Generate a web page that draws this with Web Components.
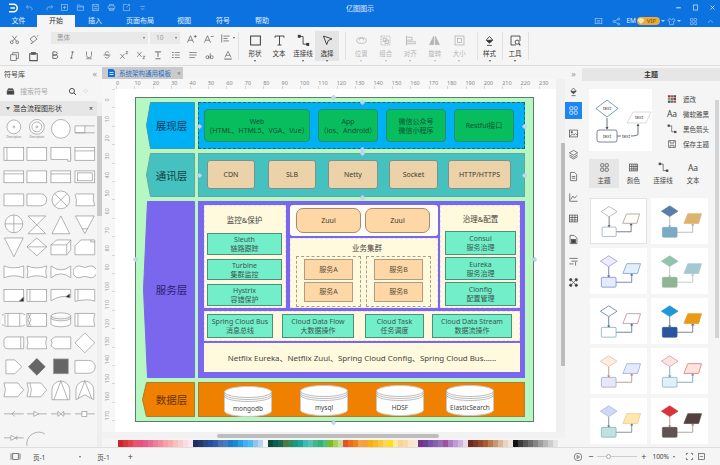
<!DOCTYPE html>
<html lang="zh">
<head>
<meta charset="utf-8">
<title>亿图图示</title>
<style>
  html, body { margin: 0; padding: 0; height: 100%; overflow: hidden; }
  body { font-family: "Noto Sans", "Noto Sans CJK SC", sans-serif; color: #333; }
</style>
</head>
<body>
<edraw-app></edraw-app>
<script>
const ICONS = {
  logo: '<path d="M4 3h6a5 5 0 0 1 0 10H4M6 8h6" stroke-width="2"/>',
  undo: '<path d="M5 4 2.5 7 5 10M3 7h6a4 4 0 0 1 3 6"/>',
  redo: '<path d="M11 4l2.5 3L11 10M13 7H7a4 4 0 0 0-3 6"/>',
  newfile: '<rect x="2.5" y="2.5" width="11" height="11"/><path d="M8 5v6M5 8h6"/>',
  open: '<path d="M2.5 13V3.5h4l1 2h6V13zM2.5 7h11"/>',
  save: '<path d="M2.5 2.5h11v11h-11zM5 2.5v4h6v-4M5 13.5V10h6v3.5"/>',
  print: '<rect x="2" y="5" width="12" height="6" rx="2"/><path d="M4.5 5V2.5h7V5M4.5 9.5h7v4h-7z"/>',
  exportf: '<path d="M9 2.5H2.5v11h11V8M8 8l5.500-5.500M10 2.500h3.500V6"/>',
  more: '<path d="M4 6h8M5 9l3 3 3-3"/>',
  min: '<path d="M4 8.500h8" stroke-width="1.500"/>',
  max: '<rect x="4" y="3.500" width="8" height="9"/>',
  close: '<path d="m4.500 4.500 7 7m0-7-7 7" stroke-width="1.200"/>',
  chat: '<rect x="2" y="3" width="12" height="9"/><path d="M5 6.500h6M5 9h6"/>',
  share: '<circle cx="12" cy="3.500" r="1.800"/><circle cx="12" cy="12.500" r="1.800"/><circle cx="3.500" cy="8" r="1.800"/><path d="m5 7 5.500-2.800M5 9l5.500 2.800"/>',
  shirt: '<path d="M5.500 2.500 1.500 5l1.500 3 1.500-.8v6.300h7V7.200l1.500.8 1.500-3-4-2.500a2.500 2.500 0 0 1-5 0z"/>',
  apps: '<rect x="2.500" y="2.500" width="4.500" height="4.500" rx="1"/><rect x="9" y="2.500" width="4.500" height="4.500" rx="1"/><rect x="2.500" y="9" width="4.500" height="4.500" rx="1"/><rect x="9" y="9" width="4.500" height="4.500" rx="1"/>',
  chevup: '<path d="m3.500 10 4.500-4 4.500 4"/>',
  cut: '<circle cx="4" cy="12" r="2"/><circle cx="12" cy="12" r="2"/><path d="M5.200 10.500 11.500 2.500M10.800 10.500 4.500 2.500"/>',
  brush: '<path d="m3 7 6-4.500 4 5-6 4.500zM13 3.500 15 2M7 12l-2 2.500-1-2"/>',
  copy: '<rect x="5.500" y="2.500" width="8" height="8.500"/><rect x="2.500" y="5.500" width="8" height="8.500" fill="#f5f5f5"/>',
  paste: '<path d="M5 4H2.500v10h11V4H11" stroke-width="1.500"/><rect x="5" y="2" width="6" height="3" fill="currentColor"/>',
  aplus: '<path d="m2 14 4.500-10L11 14M3.800 10.500h5.400M11.500 5h4M13.500 3v4"/>',
  aminus: '<path d="m2 14 4.500-10L11 14M3.800 10.500h5.400M11.500 5h4"/>',
  align: '<path d="M2.500 2v12M5 4.500h9M5 8h6M5 11.500h8"/>',
  bold: '<path d="M4.500 3h4.500a2.500 2.500 0 0 1 0 5H4.500zM4.500 8H10a2.800 2.800 0 0 1 0 5.500H4.500z" stroke-width="1.300"/>',
  italic: '<path d="M7 3h4M5 13h4M9 3 7 13" stroke-width="1.200"/>',
  under: '<path d="M4 2.500v6a4 4 0 0 0 8 0v-6M3.500 14h9"/>',
  strike: '<path d="M11.500 4.500A3.500 2.500 0 0 0 8 3C4 3 4 7.500 8 8c4.500.5 4 5-.2 5a4 3 0 0 1-3.500-2M2.500 8h11"/>',
  sup: '<path d="m2 6 7 8M9 6l-7 8M11 2.500h3l-3 3.500h3"/>',
  sub: '<path d="m2 3 7 8M9 3l-7 8M11 10h3l-3 4h3"/>',
  tcolor: '<path d="M3 3h10M8 3v8M4 14h8" stroke-width="1.300"/>',
  list1: '<path d="M6 4h8M6 8h8M6 12h8"/><path d="M2 4h2M2 8h2M2 12h2" stroke-width="1.600"/>',
  list2: '<path d="M2 4h12M2 8h12M2 12h9"/>',
  ab: '<path d="M1.500 11.500a2.300 2.300 0 1 1 4.600 0 2.300 2.300 0 1 1-4.600 0M6.100 9v5M8.500 5v9M8.500 11.500a2.300 2.300 0 1 0 4.600 0 2.300 2.300 0 1 0-4.600 0"/>',
  acolor: '<path d="m3 12 5-10 5 10M4.800 8.500h6.400"/><path d="M2 14.500h12" stroke-width="1.400"/>',
  rect: '<rect x="2" y="2.500" width="12" height="11" stroke-width="1.200"/>',
  text: '<path d="M2.500 4.500V2.500h11v2M8 2.500v11M5.500 13.500h5" stroke-width="1.100"/>',
  conn: '<path d="M3 3h4.500v9.500H13" stroke-width="1"/><rect x="1.500" y="1.500" width="2.500" height="2.500" fill="currentColor"/><rect x="12" y="11.500" width="2.500" height="2.500" fill="currentColor"/>',
  select: '<path d="m3 2.500 10.500 3.500-4.500 2-2 5z" stroke-width="1.100"/>',
  pos: '<ellipse cx="8" cy="8" rx="6" ry="3.500"/><path d="M5 8a3 3 0 0 1 6 0"/>',
  group: '<rect x="2.500" y="2.500" width="11" height="11" stroke-dasharray="2 1"/><rect x="5" y="5" width="4" height="4"/><rect x="7.500" y="7.500" width="4" height="4"/>',
  alignl: '<path d="M3 2v12M3 4h7v3.500H3M3 9.500h11V12H3"/>',
  flip: '<path d="M7 3v10H2zM9 3v10h5z" fill="currentColor"/>',
  sizei: '<rect x="2.500" y="2.500" width="11" height="11"/><rect x="5.500" y="5.500" width="5" height="5"/>',
  bucket: '<path d="m8 3 4 4.500L8 11 4 7.500zM5 14h6"/><path d="m4.500 8 7-.5L8 11z" fill="currentColor"/>',
  tools: '<path d="M2.500 13.500v-11h11v6M2.500 13.500h6"/><circle cx="10" cy="10" r="2.500"/><path d="m12 12 2 2" stroke-width="1.400"/>',
  search: '<circle cx="7" cy="7" r="4.500" stroke-width="1.500"/><path d="m10.500 10.500 3.500 3.500" stroke-width="1.700"/>',
  lib: '<path d="M2 8 4 3h8l2 5v5H2z" fill="currentColor"/><path d="M4 6h8" stroke="#fff"/>',
  image: '<rect x="2" y="3" width="12" height="10"/><path d="m3 12 3.500-3.500 2 2L11 8l2.500 2.500" /><circle cx="5.500" cy="6" r="1" fill="currentColor"/>',
  layers: '<path d="M8 2 14 5.500 8 9 2 5.500zM2 8.500 8 12l6-3.500M2 11l6 3.500 6-3.500"/>',
  page: '<path d="M3.500 2h6l3 3v9h-9zM5.500 8h5M5.500 10.500h5"/>',
  chart: '<path d="M2.500 2v11.500H14M4 11l3-5 2.500 3L13 5"/>',
  table: '<rect x="2" y="3" width="12" height="10"/><path d="M2 6.500h12M2 10h12M6 3v10M10 3v10"/>',
  pagex: '<path d="M3 2h6l4 4v8H3z"/><rect x="5" y="8" width="6" height="5" fill="currentColor"/>',
  sort: '<path d="M2 3.500h12M5 7.500h9M2 11.500h6M11 9v5"/>',
  scatter: '<path d="m5 5 6 6M11 5l-6 6" /><g fill="currentColor"><circle cx="4" cy="4" r="1.800"/><circle cx="12" cy="4" r="1.800"/><circle cx="4" cy="12" r="1.800"/><circle cx="12" cy="12" r="1.800"/></g>',
  grid: '<rect x="2" y="3" width="12" height="10"/><path d="M2 6.500h12M2 10h12M5.500 3v10M8.500 3v10M11.500 3v10"/>',
  swatch: '<g stroke="none"><rect x="1.500" y="2" width="4" height="3.500" fill="#8a3b3f"/><rect x="6" y="2" width="4" height="3.500" fill="#b0524a"/><rect x="10.500" y="2" width="4" height="3.500" fill="#5b4a4e"/><rect x="1.500" y="6.300" width="4" height="3.500" fill="#b98a4a"/><rect x="6" y="6.300" width="4" height="3.500" fill="#5a7f9a"/><rect x="10.500" y="6.300" width="4" height="3.500" fill="#8a3b3f"/><rect x="1.500" y="10.600" width="4" height="3.500" fill="#5b4a4e"/><rect x="6" y="10.600" width="4" height="3.500" fill="#3f7f6a"/><rect x="10.500" y="10.600" width="4" height="3.500" fill="#b0524a"/></g>',
  frame: '<rect x="4" y="3.500" width="8" height="9"/><path d="M1.500 3.500v9M14.500 3.500v9"/>',
  play: '<circle cx="8" cy="8" r="6"/><path d="m6.500 5.500 4 2.500-4 2.500z"/>',
  full: '<path d="M2.500 5.500v-3h3M10.500 2.500h3v3M13.500 10.500v3h-3M5.500 13.500h-3v-3" stroke-width="1.200"/>',
  fit: '<rect x="2.500" y="3" width="11" height="10" stroke-width="1.200"/><path d="M5 8h6"/>'
};

class UiIcon extends HTMLElement {
  connectedCallback() {
    const s = this.getAttribute("size") || 12;
    this.attachShadow({ mode: "open" }).innerHTML = `
      <style>:host{display:inline-flex;width:${s}px;height:${s}px;color:${this.getAttribute("color") || "inherit"}}
      svg{width:100%;height:100%;fill:none;stroke:currentColor;stroke-width:1}</style>
      <svg viewBox="0 0 16 16">${ICONS[this.getAttribute("name")] || ""}</svg>`;
  }
}
customElements.define("ui-icon", UiIcon);

class TitleBar extends HTMLElement {
  constructor() {
    super();
    const left = ["undo", "redo", "newfile", "open", "save", "print", "exportf", "more"];
    this.attachShadow({ mode: "open" }).innerHTML = `
      <style>
        :host{display:grid;grid-template-columns:1fr auto 1fr;align-items:center;height:15px;background:#0b72e0;color:#fff;font-size:7px}
        .l{display:flex;align-items:center;padding-left:6px;color:#b5d6fa}
        .l ui-icon{margin-right:6.500px}
        .l ui-icon:nth-child(2){margin-right:11px}
        .l ui-icon:nth-child(8){margin-right:7px}
        .l ui-icon:first-child{color:#fff}
        .r{display:flex;justify-content:flex-end;gap:8px;padding-right:3px}
        span{opacity:.85}
      </style>
      <div class="l"><ui-icon name="logo" size="12"></ui-icon>${left.map(n => `<ui-icon name="${n}" size="9"></ui-icon>`).join("")}</div>
      <span>亿图图示</span>
      <div class="r"><ui-icon name="min" size="9"></ui-icon><ui-icon name="max" size="9"></ui-icon><ui-icon name="close" size="9"></ui-icon></div>`;
  }
}
customElements.define("title-bar", TitleBar);

class TabBar extends HTMLElement {
  constructor() {
    super();
    const tabs = [["文件", 37], ["开始", 38], ["插入", 40], ["页面布局", 50], ["视图", 38], ["符号", 40], ["帮助", 38]];
    this.attachShadow({ mode: "open" }).innerHTML = `
      <style>
        :host{display:flex;align-items:stretch;height:12px;background:#0b72e0;color:#e3f0fe;font-size:7px;line-height:12px}
        b{font-weight:400;text-align:center}
        .on{background:#f5f5f5;color:#333}
        .r{margin-left:auto;display:flex;align-items:center;color:#bcdcff;padding-right:5px}
        .em{margin:0 1px 0 5px;color:#e8f3ff;font-size:6.500px}
        .vip{display:flex;align-items:center;justify-content:space-between;width:23px;height:8px;line-height:8px;border-radius:4px;background:#eba93b;color:#7a4c05;font-size:6px;box-sizing:border-box;padding:0 4px 0 1px;margin-right:1px}
        .vip svg{width:6px;height:6px}
        .c{width:0;height:0;border:2px solid transparent;border-top:2.500px solid #bcdcff;border-bottom:0;margin-right:2px}
      </style>
      ${tabs.map((t, i) => `<b class="${i == 1 ? "on" : ""}" style="width:${t[1]}px">${t[0]}</b>`).join("")}
      <div class="r">
        <ui-icon name="chat" size="9" style="margin-right:9px"></ui-icon>
        <ui-icon name="share" size="9"></ui-icon>
        <span class="em">EM</span><span class="vip"><svg viewBox="0 0 6 6"><path d="M0 1 3 0l3 1v2L3 6 0 3z" fill="#f8e6b0"/></svg>VIP</span><i class="c"></i>
        <ui-icon name="shirt" size="9" style="margin-right:1px"></ui-icon><i class="c" style="margin-right:8px"></i>
        <ui-icon name="apps" size="9" style="margin-right:8px"></ui-icon>
        <ui-icon name="chevup" size="9"></ui-icon>
      </div>`;
  }
}
customElements.define("tab-bar", TabBar);

class BigButton extends HTMLElement {
  connectedCallback() {
    const off = this.hasAttribute("off");
    const caret = !this.hasAttribute("nocaret");
    this.attachShadow({ mode: "open" }).innerHTML = `
      <style>
        :host{display:flex;flex-direction:column;align-items:center;width:${this.getAttribute("w") || 24}px;height:30px;padding-top:0;font-size:6.500px;color:${off ? "#b5b5b5" : "#333"};box-sizing:border-box;${this.hasAttribute("on") ? "background:#e4e4e4;" : ""}}
        span{line-height:8px;margin-top:3px;white-space:nowrap}
        i{width:0;height:0;border:1.500px solid transparent;border-top:2px solid ${off ? "#bbb" : "#555"};border-bottom:0;margin-top:2px}
        ui-icon{margin-top:3px}
      </style>
      <ui-icon name="${this.getAttribute("icon")}" size="13"></ui-icon><span>${this.getAttribute("label")}</span>${caret ? "<i></i>" : ""}`;
  }
}
customElements.define("big-button", BigButton);

class RibbonBar extends HTMLElement {
  constructor() {
    super();
    const row1 = ["aplus", "aminus", "align"];
    const row2 = ["bold", "italic", "under", "strike", "sup", "sub", "tcolor", "list1", "list2", "ab", "acolor"];
    this.attachShadow({ mode: "open" }).innerHTML = `
      <style>
        :host{display:flex;height:39px;background:#f5f5f5;border-bottom:1px solid #dedede;box-sizing:border-box;color:#555;font-size:6.500px;align-items:flex-start;padding-top:5px}
        .clip{display:grid;grid-template-columns:19px 19px;grid-auto-rows:17px;width:46px;padding-left:4.500px;box-sizing:border-box;justify-items:center;align-items:center;margin-top:-1px}
        .font{width:193px;display:flex;flex-direction:column;gap:5px;padding-left:5px;box-sizing:border-box;height:28px;border-right:1px solid #e2e2e2;margin-right:4px}
        .r1,.r2{display:flex;align-items:center;height:12px}
        .sel{background:#e9e9e9;height:12px;line-height:12px;padding-left:6px;box-sizing:border-box;color:#999;display:flex;justify-content:space-between;align-items:center;padding-right:3px}
        .sel i,.car{width:0;height:0;border:1.500px solid transparent;border-top:2px solid #666;border-bottom:0}
        .r1 ui-icon{margin-left:6px}
        .r2 .cell{width:17.300px;display:flex;justify-content:center;align-items:center}
        .sep{width:1px;height:28px;background:#e2e2e2;flex:none}
        .grp{display:flex;align-items:flex-start}
      </style>
      <div class="clip">
        <ui-icon name="cut" size="11"></ui-icon><ui-icon name="brush" size="11"></ui-icon>
        <ui-icon name="copy" size="11"></ui-icon><ui-icon name="paste" size="11"></ui-icon>
      </div>
      <div class="font">
        <div class="r1">
          <div class="sel" style="width:97px">黑体<i></i></div>
          <div class="sel" style="width:30px;margin-left:2px">10<i></i></div>
          ${row1.map(n => `<ui-icon name="${n}" size="11"></ui-icon>`).join("")}<i class="car" style="margin-left:2px"></i>
        </div>
        <div class="r2" style="margin-left:-5px">${row2.map(n => `<span class="cell"><ui-icon name="${n}" size="10"></ui-icon></span>`).join("")}</div>
      </div>
      <div class="grp" style="margin-top:-1px">
        <big-button icon="rect" label="形状"></big-button>
        <big-button icon="text" label="文本" nocaret></big-button>
        <big-button icon="conn" label="连接线"></big-button>
        <big-button icon="select" label="选择" on></big-button>
      </div>
      <div class="sep" style="margin-left:6px"></div>
      <div class="grp" style="margin:-1px 3px 0">
        <big-button icon="pos" label="位置" off w="24.500"></big-button>
        <big-button icon="group" label="组合" off w="24.500"></big-button>
        <big-button icon="alignl" label="对齐" off w="24.500"></big-button>
        <big-button icon="flip" label="旋转" off w="24.500"></big-button>
        <big-button icon="sizei" label="大小" off w="24.500"></big-button>
      </div>
      <div class="sep" style="margin-left:2px"></div>
      <big-button icon="bucket" label="样式" style="margin-top:-1px"></big-button>
      <div class="sep"></div>
      <big-button icon="tools" label="工具" w="25" style="margin-top:-1px"></big-button>
      <div class="sep"></div>`;
  }
}
customElements.define("ribbon-bar", RibbonBar);

// 形状库: 每个格子 24x24
const R = (x, y, w, h, extra = "") => `<rect x="${x}" y="${y}" width="${w}" height="${h}" ${extra}/>`;
const L = d => `<path d="${d}"/>`;
const SHAPES = [
  `<circle cx="12" cy="9" r="7"/><circle cx="12" cy="9" r="1"/><text x="12" y="20" font-size="2.800" text-anchor="middle" fill="#777" stroke="none">Description</text>`,
  `<circle cx="12" cy="9" r="7.500"/><circle cx="12" cy="9" r="5"/><circle cx="12" cy="9" r="1"/><text x="12" y="20" font-size="2.800" text-anchor="middle" fill="#777" stroke="none">Description</text>`,
  `<circle cx="12" cy="11" r="9.500"/>`,
  L("M2 8h20M2 15h20M2 8v7h10V8"),
  R(2, 5.500, 20, 13) + L("M5 5.500v13"), R(2, 5.500, 20, 13), R(2, 5.500, 20, 12) + L("M19 17.500v2h3v-8"), R(2, 5.500, 20, 13) + L("M2 9h20"),
  R(2, 6, 20, 12) + L("M2 9h20"), R(2, 6, 20, 12), R(2, 6, 20, 12) + L("M2 9h20"), R(2, 6, 20, 12) + R(4.500, 8, 15, 8),
  L("M2 5h20v12H2M2 5v12"), L("M2 5h14a6 6 0 0 1 0 12H2z"), `<circle cx="12" cy="11" r="9"/>` + L("m5.600 4.600 12.800 12.800m0-12.800L5.600 17.400"), L("M3 5h18q-1.500 6 1 12H3q1.500-6-1-12"),
  `<circle cx="12" cy="11" r="9"/>` + L("M3 11h18M12 2v18"), L("M3 3h18L3 21h18z"), L("M12 3 21 21H3z"), L("M2.500 3h19L12 21zM9 16h6"),
  L("M2.500 2h19L12 21z"), L("M12 2 22 11 12 20 2 11zM2 11h20"), L("M2 19V9l6-5h14v10l-4 5zM2 9h16v10M18 9l4-5"), L("M2 19V10l6-6h14v15zM18 4v2h4"),
  L("M2 6q10 4 20 0v12q-10-4-20 0z"), L("M2 6q10 4 20 0l-1 6 1 6q-10-4-20 0l1-6z"), L("M2 6q10 8 20 0v12q-10-8-20 0z"), L("M6 6q6 3 12 0a6 6 0 1 1 0 12q-6-3-12 0a6 6 0 1 1 0-12z"),
  R(2, 5.500, 20, 12) + `<path d="m22 13v4.500h-4.500z" fill="#222"/>`, R(2, 5.500, 20, 12) + L("M5 5.500v12"), L("M2 5.500h20v8q-10-3-20 3.500z") + `<path d="m21 10v4l-4-1z" fill="#222"/>`, L("M2 5.500h20v12q-5-3-20 0zM5 5.500v11"),
  L("M5 5.500h14a7 6.500 0 0 1 0 13H5a7 6.500 0 0 1 0-13zM6 5.500v13M3 7v10M18 5.500v13"), R(2, 5.500, 20, 13) + L("M3 5.500l3 6.500-3 6.500M6 5.500l-3 6.500 3 6.500"), L("M2 8a10 3 0 0 1 20 0v8a10 3 0 0 1-20 0zM2 8a10 3 0 0 0 20 0M2 10a10 3 0 0 0 20 0"), L("M2 5.500h20l-1 6.500 1 6.500H2zM5 5.500v13"),
  L("M5 6h17v12H5a4 4 0 0 1-3-3V9a4 4 0 0 1 3-3zM19 6v12"), L("M2 6h20l-1 6 1 6H2l1-6z"), L("M6 6h16v12H6l-4-3 1-3-1-3z"), L("M12 2 22 12 12 22 2 12z"),
  L("M4 5h9l7 7-7 7H4z"), `<path d="M12 3.500 20.500 12 12 20.500 3.500 12z" fill="#666" stroke="#666"/>`, `<rect x="4.500" y="4" width="15" height="15" fill="#666" stroke="#999"/>`, L("M2 5.500h14a6.500 6.500 0 0 1 0 13H2z"),
  L("M2 4h14l6 7-6 7H2l1.500-7z"), L("M2 4h14l6 7-6 7H2l1.500-7zM5 4l1.500 7L5 18"), L("M3 21V11a9 9 0 0 1 18 0v10zM12 2 5 21M12 2l7 19"), L("M3 21V11a9 9 0 0 1 18 0v10l-9-5zM12 2 5 20M12 2l7 18"),
  L("M2 12h20M13 9.500 10 12l3 2.500"), L("M2 12h20") + `<path d="M9 9.500 14 12l-5 2.500z" fill="#fff"/>`, L("M2 12h20") + `<path d="m9 9.500 3 2.500-3 2.500zM15 9.500 12 12l3 2.500z" fill="#fff"/>`, L("M2 12h20") + `<rect x="9" y="9.500" width="5" height="5" fill="#fff"/>`,
  L("M2 12h20") + `<path d="M9 9.500 14 12l-5 2.500z" fill="#fff"/><path d="M15 10v4"/>`, `<path d="M2 20A12 12 0 0 1 20 8" fill="none"/>`
];

class ShapeTile extends HTMLElement {
  connectedCallback() {
    this.attachShadow({ mode: "open" }).innerHTML = `
      <style>:host{display:block;width:23.700px;height:23.700px}
      svg{width:100%;height:100%;fill:#fff;stroke:#8b8b8b;stroke-width:.65;font-family:"Noto Sans",sans-serif}</style>
      <svg viewBox="0 0 24 24">${SHAPES[+this.getAttribute("i")] || ""}</svg>`;
  }
}
customElements.define("shape-tile", ShapeTile);

class SymbolPanel extends HTMLElement {
  constructor() {
    super();
    this.attachShadow({ mode: "open" }).innerHTML = `
      <style>
        :host{display:flex;flex-direction:column;width:102px;background:#f5f5f5;font-size:7px;color:#444;overflow:hidden;flex:none}
        .h{display:flex;justify-content:space-between;align-items:center;height:14px;padding:1px 5px 0 4px}
        .arr{color:#999;font-size:9px;line-height:10px}
        .s{display:flex;align-items:center;height:20px;padding-left:6px;color:#aaa}
        .s span{margin-left:5px;width:46px}
        .sec{display:flex;align-items:center;justify-content:space-between;height:14.500px;background:#e6e6e6;margin-right:5px;padding:0 4px 0 6px;color:#333}
        .sec i{width:0;height:0;border:2px solid transparent;border-top:3px solid #555;border-bottom:0;margin-right:3px}
        .sec div{display:flex;align-items:center}
        .body{display:flex;flex:1;min-height:0}
        .g{display:grid;grid-template-columns:repeat(4,23.700px);grid-auto-rows:23.700px;padding:2.500px 0 0 1.500px;width:96.500px;box-sizing:border-box;height:100%;overflow:hidden}
        .bar{width:5px;background:#eee;margin-top:-14px}
        .bar div{height:100px;background:#c9c9c9;margin-top:14px}
        .sp{margin-left:6px;font-size:5px;line-height:5px;color:#bbb;text-align:center}
      </style>
      <div class="h"><span>符号库</span><span class="arr">«</span></div>
      <div class="s"><ui-icon name="lib" size="9" color="#444"></ui-icon><span>搜索符号</span><ui-icon name="search" size="9" color="#333" style="margin-left:2px"></ui-icon><div class="sp">︿<br>﹀</div></div>
      <div class="sec"><div><i></i>混合流程图形状</div><span>×</span></div>
      <div class="body"><div class="g">${SHAPES.map((_, i) => `<shape-tile i="${i}"></shape-tile>`).join("")}</div><div class="bar"><div></div></div></div>`;
  }
}
customElements.define("symbol-panel", SymbolPanel);

class DocTab extends HTMLElement {
  constructor() {
    super();
    this.attachShadow({ mode: "open" }).innerHTML = `
      <style>
        :host{display:flex;align-items:center;height:12px;width:81px;background:#cacaca;color:#2a70c8;font-size:6.500px;box-sizing:border-box;padding-left:6px;white-space:nowrap}
        svg{width:7px;height:8px;margin-right:4px;flex:none}
        em{font-style:normal;color:#777;margin-left:6px}
      </style>
      <svg viewBox="0 0 7 8"><path d="M0 0h5l2 2v6H0z" fill="#0b72e0"/><path d="M1.500 3.500h4M1.500 5.500h4" stroke="#fff" stroke-width=".8"/></svg>
      <slot></slot><em>×</em>`;
  }
}
customElements.define("doc-tab", DocTab);

class TopRuler extends HTMLElement {
  constructor() {
    super();
    const nums = [];
    for (let i = 0; i <= 230; i += 10) nums.push(`<span>${i}</span>`);
    this.attachShadow({ mode: "open" }).innerHTML = `
      <style>
        :host{display:flex;height:10px;background:#f7f7f7 repeating-linear-gradient(90deg,#d8d8d8 0 1px,transparent 1px 18.400px) 14px 100%/100% 3px no-repeat;font-size:5.500px;color:#888;line-height:8px;padding-left:14px;overflow:hidden;box-sizing:border-box}
        span{flex:none;width:18.400px}
      </style>${nums.join("")}`;
  }
}
customElements.define("top-ruler", TopRuler);

class SideRuler extends HTMLElement {
  constructor() {
    super();
    const nums = [];
    for (let i = 0; i <= 170; i += 10) nums.push(`<span>${i}</span>`);
    this.attachShadow({ mode: "open" }).innerHTML = `
      <style>
        :host{display:flex;flex-direction:column;width:13px;flex:none;background:#f7f7f7 repeating-linear-gradient(#d8d8d8 0 1px,transparent 1px 18.400px) 100% 0/3px 100% no-repeat;font-size:5.500px;color:#999;overflow:hidden;padding-top:9px;box-sizing:border-box}
        span{flex:none;height:18.400px;writing-mode:vertical-rl;transform:rotate(180deg);line-height:8px;margin-left:1px;text-align:right}
      </style>${nums.join("")}`;
  }
}
customElements.define("side-ruler", SideRuler);

class LayerLabel extends HTMLElement {
  connectedCallback() {
    const h = +this.getAttribute("h"), tip = +this.getAttribute("tip"), top = tip + 4.5;
    const mid = h / 2;
    this.attachShadow({ mode: "open" }).innerHTML = `
      <style>
        :host{display:grid;width:53px;height:${h}px;font-size:10.500px;color:${this.getAttribute("ink")}}
        svg,span{grid-area:1/1}
        svg{width:53px;height:${h}px}
        span{display:flex;align-items:center;justify-content:center;padding-left:6px}
      </style>
      <svg viewBox="0 0 53 ${h}"><polygon points="${tip + .5},${mid} ${top},.5 52.500,.5 52.500,${h - .5} ${top},${h - .5}" fill="${this.getAttribute("fill")}" stroke="${this.getAttribute("line")}"/></svg>
      <span><slot></slot></span>`;
  }
}
customElements.define("layer-label", LayerLabel);

// 圆角方框, 颜色由 kind 决定
class ArchBox extends HTMLElement {
  connectedCallback() {
    const k = {
      green: "background:#08bd5e;border-color:#1f8f6e;border-radius:4px;color:#0d4f2e;font-size:7px",
      tan: "background:#ebd2a8;border-color:#7f9088;border-radius:3px;color:#3f3a30;font-size:7px",
      teal: "background:#72eec8;border-color:#4a8f7f;color:#3c5650;font-size:7px",
      peach: "background:#fdd7a6;border-color:#b29b80;color:#5c4b38;font-size:7px",
      zuul: "background:#fdd7a6;border-color:#a48c70;border-radius:7px;color:#40382c;font-size:7px"
    }[this.getAttribute("kind")];
    this.attachShadow({ mode: "open" }).innerHTML = `
      <style>:host{display:flex;flex-direction:column;align-items:center;justify-content:center;text-align:center;border:1px solid;box-sizing:border-box;line-height:9px;white-space:nowrap;${k}}</style><slot></slot>`;
  }
}
customElements.define("arch-box", ArchBox);

class DbCylinder extends HTMLElement {
  connectedCallback() {
    this.attachShadow({ mode: "open" }).innerHTML = `
      <style>:host{display:block;width:48px;height:31px}
      svg{width:100%;height:100%;font-family:"Noto Sans",sans-serif}</style>
      <svg viewBox="0 0 48 31">
        <path d="M.5 6C.5 3 11 .5 24 .5S47.500 3 47.500 6v19c0 3-10.500 5.500-23.500 5.500S.5 28 .5 25z" fill="#fff" stroke="#c8c8c8"/>
        <path d="M.5 6c0 3 10.500 5.500 23.500 5.500S47.500 9 47.500 6M.5 8c0 3 10.500 5.500 23.500 5.500S47.500 11 47.500 8M.5 10c0 3 10.500 5.500 23.500 5.500S47.500 13 47.500 10" fill="none" stroke="#8f8f8f" stroke-width=".6"/>
        <text x="24" y="25" font-size="6.500" text-anchor="middle" fill="#444">${this.getAttribute("label")}</text>
      </svg>`;
  }
}
customElements.define("db-cylinder", DbCylinder);

class SelHandle extends HTMLElement {
  constructor() {
    super();
    this.attachShadow({ mode: "open" }).innerHTML = `
      <style>:host{position:absolute;width:5px;height:5px;margin:-2.500px 0 0 -2.500px}
      svg{display:block;width:5px;height:5px}</style>
      <svg viewBox="0 0 10 10"><path d="M5 0 10 5 5 10 0 5z" fill="#c6d6f2" stroke="#a0bcea"/></svg>`;
  }
}
customElements.define("sel-handle", SelHandle);

class ArchDiagram extends HTMLElement {
  constructor() {
    super();
    const handles = [[63, 28], [63, 77], [226, 4], [388, 28], [226, 51], [226, 55], [388, 77], [226, 99], [-1, 161], [197, 324], [197, -1], [398, 161]];
    this.attachShadow({ mode: "open" }).innerHTML = `
      <style>
        :host{display:grid;position:relative;box-sizing:border-box;width:399px;height:325px;background:#b7f7c2;border:1px solid #5f7d66;padding:4px 0 0 6px;
          grid-template-columns:53px 327px;grid-template-rows:47px 44px 177px 35px;column-gap:3px;row-gap:4px}
        .content{box-sizing:border-box}
        .web{background:#00b0f5;border:1px dashed #27606f;display:grid;grid-template-columns:106px 60px 60px 60px;column-gap:8px;padding:6px 0 6px 5px}
        .net{background:#45c1bf;border:1px solid #69a5a0;display:flex;padding:6px 0 7px 8px}
        .svc{background:#7b67ee;padding:4px 5px 6px 6px;display:grid;grid-template-columns:82px 148px 80px;column-gap:3px;grid-template-rows:103px 31px 29px;row-gap:2px}
        .panel{background:#fffadd;outline:1px dashed #e7e0fb;outline-offset:-1px;box-sizing:border-box}
        .title{font-size:7.500px;color:#444;text-align:center}
        .stack{display:flex;flex-direction:column;padding:0 4px 2px 3px;gap:4px}
        .stack .title{height:24px;line-height:30px;flex:none}
        .stack arch-box{flex:1}
        .mid{display:grid;grid-template-rows:31px 70px;row-gap:2px;margin:0 -1px 0 1px}
        .zuul{background:#fffdf3;border-radius:3px;display:flex;gap:4px;padding:3px 0 3px 6px}
        .zuul arch-box{width:65px}
        .cluster{padding:0 0 1px 6px;display:flex;flex-direction:column}
        .cluster .title{height:18px;line-height:20px;flex:none}
        .gs{display:flex;gap:5px;flex:1}
        .g{width:65px;border:1px dashed #a8a08a;box-sizing:border-box;display:flex;flex-direction:column;gap:2px;padding:2px 7px 4px}
        .g arch-box{flex:1}
        .bus{grid-column:1/-1;display:flex;align-items:center;padding:3px 0 3px 3px;gap:9px;margin-top:1px}
        .bus arch-box{height:100%}
        .names{grid-column:1/-1;display:flex;align-items:center;justify-content:center;font-size:7.900px;color:#444;outline:none;padding-bottom:1px}
        .db{background:#f08000;border:1px solid #b07a30;display:grid;grid-template-columns:48px 48px 48px 48px;column-gap:28px;padding:1px 0 0 25px;align-items:center}
      </style>
      <layer-label h="47" tip="4" fill="#00b0f5" line="#3d9ab5" ink="#0c3a5c">展现层</layer-label>
      <div class="content web">
        <arch-box kind="green"><span>Web</span><span>（HTML、HTML5、VGA、Vue）</span></arch-box>
        <arch-box kind="green"><span>App</span><span>（ios、Android）</span></arch-box>
        <arch-box kind="green"><span>微信公众号</span><span>微信小程序</span></arch-box>
        <arch-box kind="green">Restful接口</arch-box>
      </div>
      <layer-label h="44" tip="4" fill="#45c1bf" line="#69a5a0" ink="#123f44">通讯层</layer-label>
      <div class="content net">
        <arch-box kind="tan" style="width:48px">CDN</arch-box>
        <arch-box kind="tan" style="width:48px;margin-left:13px">SLB</arch-box>
        <arch-box kind="tan" style="width:50px;margin-left:12px">Netty</arch-box>
        <arch-box kind="tan" style="width:49px;margin-left:11px">Socket</arch-box>
        <arch-box kind="tan" style="width:63px;margin-left:10px">HTTP/HTTPS</arch-box>
      </div>
      <layer-label h="177" tip="1" fill="#7b67ee" line="#7b67ee" ink="#2a2070">服务层</layer-label>
      <div class="content svc">
        <div class="panel stack">
          <div class="title">监控&amp;保护</div>
          <arch-box kind="teal"><span>Sleuth</span><span>链路跟踪</span></arch-box>
          <arch-box kind="teal"><span>Turbine</span><span>集群监控</span></arch-box>
          <arch-box kind="teal"><span>Hystrix</span><span>容错保护</span></arch-box>
        </div>
        <div class="mid">
          <div class="zuul"><arch-box kind="zuul">Zuul</arch-box><arch-box kind="zuul">Zuul</arch-box></div>
          <div class="panel cluster">
            <div class="title">业务集群</div>
            <div class="gs">
              <div class="g"><arch-box kind="peach">服务A</arch-box><arch-box kind="peach">服务A</arch-box></div>
              <div class="g"><arch-box kind="peach">服务B</arch-box><arch-box kind="peach">服务B</arch-box></div>
            </div>
          </div>
        </div>
        <div class="panel stack" style="gap:2px;padding:0 4px 2px 5px">
          <div class="title" style="line-height:28px">治理&amp;配置</div>
          <arch-box kind="teal"><span>Consul</span><span>服务治理</span></arch-box>
          <arch-box kind="teal"><span>Eureka</span><span>服务治理</span></arch-box>
          <arch-box kind="teal"><span>Clonfig</span><span>配置管理</span></arch-box>
        </div>
        <div class="panel bus">
          <arch-box kind="teal" style="width:66px"><span>Spring Cloud Bus</span><span>消息总线</span></arch-box>
          <arch-box kind="teal" style="width:72px"><span>Cloud Data Flow</span><span>大数据操作</span></arch-box>
          <arch-box kind="teal" style="width:59px;margin-left:2px"><span>Cloud Task</span><span>任务调度</span></arch-box>
          <arch-box kind="teal" style="width:80px;margin-left:-1px"><span>Cloud Data Stream</span><span>数据流操作</span></arch-box>
        </div>
        <div class="panel names">Netflix Eureka、Netflix Zuul、Spring Cloud Config、Spring Cloud Bus......</div>
      </div>
      <layer-label h="35" tip="0" fill="#f08000" line="#b07a30" ink="#6a3400">数据层</layer-label>
      <div class="content db">
        <db-cylinder label="mongodb" style="margin-top:2px"></db-cylinder>
        <db-cylinder label="mysql"></db-cylinder>
        <db-cylinder label="HDSF"></db-cylinder>
        <db-cylinder label="ElasticSearch" style="margin-left:-6px"></db-cylinder>
      </div>
      ${handles.map(h => `<sel-handle style="left:${h[0]}px;top:${h[1]}px"></sel-handle>`).join("")}`;
  }
}
customElements.define("arch-diagram", ArchDiagram);

class ColorStrip extends HTMLElement {
  constructor() {
    super();
    const cols = ["#c9262f","#d8363c","#e24452","#e65670","#ea4f7e","#e45b8e","#e76b94","#ee7e9c","#f08ea0","#f4a0a6","#f6aeac","#f8c0bc","#f8cdcd","#fbdce0","#fbe8ee",
      "#1c2f66","#22396f","#27478a","#264f9a","#2a5ca8","#4a70b4","#3f7ec0","#1c7dc0","#1b8ad4","#2b9ee0","#3cb2f0","#46bef5","#90c4e8","#b5d5ee","#f5f5f5",
      "#0d4a40","#0f5e4e","#136a58","#4d7a3a","#2f8a5e","#169a80","#1aa896","#3cbcae","#4fc5b0","#42b88a","#2fb57a","#52c07a","#7cbe1e","#a6cf5a","#c8dc9a",
      "#e8502c","#ee6a1e","#f08018","#f4a050","#f7a22c","#f8b010","#f9bc20","#fbc83a","#fcd850","#ffe018","#fce8a0","#fbd68a","#fbd9a8","#fce4c8","#f5e8d8",
      "#7b2e8a","#6b3fa0","#7a52a8","#8a5eb4","#9a6cb8","#a050a0","#b07cc8","#c09ad8","#d0b4e0","#ecd8ea",
      "#6a2c20","#7e3a26","#964828","#a85a30","#b87a50","#c89870","#d8b898","#e8d4c0","#f0e4d8",
      "#111111","#3c3c3c","#555555","#6c6c6c","#858585","#9e9e9e","#b5b5b5","#cdcdcd","#e4e4e4"];
    this.attachShadow({ mode: "open" }).innerHTML = `
      <style>:host{display:flex;height:7px;padding-left:16px;overflow:hidden}
      i{flex:none;width:5px;height:7px}</style>
      ${cols.map(c => `<i style="background:${c}"></i>`).join("")}`;
  }
}
customElements.define("color-strip", ColorStrip);

class CanvasArea extends HTMLElement {
  constructor() {
    super();
    this.attachShadow({ mode: "open" }).innerHTML = `
      <style>
        :host{display:flex;flex-direction:column;flex:1;min-width:0;background:#f5f5f5}
        .tabs{padding-top:1px;height:12px}
        .work{display:flex;flex:1;min-height:0}
        .col{display:flex;flex-direction:column;flex:1;min-width:0}
        .mid{display:flex;flex:1;min-height:0}
        .page{flex:1;background:#fff;padding:8px 0 0 20px;min-width:0;overflow:visible}
        .vs{width:9px;background:#f0f0f0;flex:none;position:relative}
        .vs div{position:absolute;left:5px;width:4px;top:64px;height:223px;background:#bcbcbc}
        .hs{height:6px;background:#f2f2f2;padding-left:115px}
        .hs div{width:222px;height:4px;background:#bdbdbd;border-radius:2px;margin-top:2px;display:block}
        .pal{background:#f5f5f5;padding-top:2px;height:9px;box-sizing:border-box}
      </style>
      <div class="tabs"><doc-tab>系统架构通用模板</doc-tab></div>
      <div class="work">
        <div class="col">
          <top-ruler></top-ruler>
          <div class="mid"><side-ruler></side-ruler><div class="page"><arch-diagram></arch-diagram></div></div>
        </div>
        <div class="vs"><div></div></div>
      </div>
      <div class="hs"><div></div></div>
      <div class="pal"><color-strip></color-strip></div>`;
  }
}
customElements.define("canvas-area", CanvasArea);

class SideDock extends HTMLElement {
  constructor() {
    const names = ["bucket", "apps", "image", "layers", "page", "chart", "table", "pagex", "sort", "scatter"];
    super();
    this.attachShadow({ mode: "open" }).innerHTML = `
      <style>
        :host{display:flex;flex-direction:column;align-items:center;width:17px;flex:none;background:#f5f5f5;color:#444}
        .t{height:15px;font-size:9px;line-height:15px;color:#999;flex:none}
        .b{width:17px;height:21.300px;display:flex;align-items:center;justify-content:center;flex:none}
        .on{background:#1e86f0;color:#fff;height:17px;margin-bottom:3.500px}
      </style>
      <div class="t">»</div>
      ${names.map((n, i) => `<div class="b ${i == 1 ? "on" : ""}"><ui-icon name="${n}" size="11"></ui-icon></div>`).join("")}`;
  }
}
customElements.define("side-dock", SideDock);

class ThemeCard extends HTMLElement {
  connectedCallback() {
    const [df, ds, pf, ps, rf, rs, ln] = this.getAttribute("c").split(",");
    this.attachShadow({ mode: "open" }).innerHTML = `
      <style>:host{display:block;background:#fff;box-sizing:border-box;${this.hasAttribute("on") ? "border:1px solid #e4e4e4;" : ""}}
      svg{display:block;width:100%;height:100%}</style>
      <svg viewBox="0 0 57 47">
        <path d="M18.500 19v10M26 35h16V27" fill="none" stroke="${ln}" stroke-width=".8"/>
        <path d="m16.800 28 1.700 2.500 1.700-2.500zM40.300 28l1.700-2.500 1.700 2.500z" fill="${ln}"/>
        <path d="M18.500 8 27 13.500 18.500 19 10 13.500z" fill="${df}" stroke="${ds}" stroke-width=".7"/>
        <path d="M37 16h14l-3 10H33z" fill="${pf}" stroke="${ps}" stroke-width=".7" stroke-linejoin="round"/>
        <rect x="11" y="30" width="15" height="10" rx="1" fill="${rf}" stroke="${rs}" stroke-width=".7"/>
      </svg>`;
  }
}
customElements.define("theme-card", ThemeCard);

class ThemePanel extends HTMLElement {
  constructor() {
    super();
    const cards = [
      "#fff,#999,#fffdf5,#888,#fff,#8a99a8,#556",
      "#5b7ea8,#5b7ea8,#dcb46e,#dcb46e,#7aaac4,#7aaac4,#aaa",
      "#ecebff,#8d8dc8,#e3f0fb,#6b8fc0,#e4ebfb,#6a80c8,#5a6aa0",
      "#8fc4ae,#8fc4ae,#a2c8d2,#a2c8d2,#8fb595,#8fb595,#bbb",
      "#fff,#44689a,#fff,#b07890,#fff,#7a9bb0,#44689a",
      "#2097d8,#2097d8,#e89a18,#e89a18,#2a55a0,#2a55a0,#667",
      "#fdeee2,#e8b090,#e3eafc,#8aa0d8,#e6e8f8,#9a9ac8,#b08a70",
      "#fde4e4,#d88a90,#ffe4de,#d0685f,#dff0fa,#7aa8c0,#6a98a8",
      "#cfd9f5,#9ab0d8,#ffe7ae,#e8c880,#bfe2e0,#78a8a8,#678",
      "#d9333a,#d9333a,#54403f,#54403f,#5f5354,#5f5354,#a88"
    ];
    const side = [["swatch", "遮改"], ["aa", "微软雅黑"], ["conn", "黑色箭头"], ["save", "保存主题"]];
    const tabs = [["apps", "主题"], ["grid", "颜色"], ["conn", "连接线"], ["aa", "文本"]];
    const ic = (n, s) => n == "aa" ? `<b class="aa">Aa</b>` : `<ui-icon name="${n}" size="${s}"></ui-icon>`;
    this.attachShadow({ mode: "open" }).innerHTML = `
      <style>
        :host{display:flex;flex-direction:column;width:138px;flex:none;background:#f5f5f5;font-size:6.500px;color:#444;position:relative;overflow:hidden}
        .head{height:13px;margin-top:2px;background:#e6e6e6;text-align:center;line-height:13px;font-size:7px;font-weight:700;color:#333;flex:none}
        .top{display:flex;padding:8px 0 0 7px;height:70px;box-sizing:border-box;flex:none}
        .prev{width:63px;height:62px;background:#fff;flex:none}
        .prev svg{width:100%;height:100%;font-family:"Noto Sans",sans-serif}
        .opts{display:flex;flex-direction:column;padding:2px 0 0 11px;gap:0}
        .opt{display:flex;align-items:center;height:15.500px}
        .opt .i{width:18px;display:flex;justify-content:center;flex:none;margin-right:2px}
        .aa{font-weight:400;font-size:8.500px;line-height:10px;color:#444}
        .tabs{display:grid;grid-template-columns:30px 29px 30px 30px;margin:8px 0 10px 7px;height:29px;flex:none}
        .tb{display:flex;flex-direction:column;align-items:center;justify-content:center;gap:4px;line-height:8px}
        .tb.on{background:#e6e6e6}
        .grid{display:grid;grid-template-columns:57px 57px;grid-auto-rows:46px;column-gap:4px;row-gap:4px;margin-left:8px}
        .bar{position:absolute;right:1px;top:34px;width:4px;height:238px;background:#d4d4d4}
      </style>
      <div class="head">主题</div>
      <div class="top">
        <div class="prev"><svg viewBox="0 0 63 62">
          <path d="M18 29v11M28 47h13q8 0 8-2V36" fill="none" stroke="#3d5560" stroke-width=".8"/>
          <path d="m16.500 38 1.500 2.500 1.500-2.500zM47.500 37l1.500-2.500 1.500 2.500z" fill="#3d5560"/>
          <path d="M18 11 29 19.500 18 28 7 19.500z" fill="#fff" stroke="#5a8a9a" stroke-width=".8"/>
          <path d="M44 23h18l-5 11H38z" fill="#fff" stroke="#ccc" stroke-width=".7"/>
          <rect x="8" y="41" width="20" height="12" rx="2" fill="#fff" stroke="#667" stroke-width=".8"/>
          <g font-size="4.500" fill="#555" text-anchor="middle"><text x="18" y="21">text</text><text x="50" y="30">text</text><text x="18" y="49">text</text><rect x="32" y="44" width="10" height="6" fill="#fff"/><text x="37" y="49">text</text></g>
        </svg></div>
        <div class="opts">${side.map(s => `<div class="opt"><span class="i">${ic(s[0], 10)}</span>${s[1]}</div>`).join("")}</div>
      </div>
      <div class="tabs">${tabs.map((t, i) => `<div class="tb ${i == 0 ? "on" : ""}">${ic(t[0], 11)}<span>${t[1]}</span></div>`).join("")}</div>
      <div class="grid">${cards.map((c, i) => `<theme-card c="${c}" ${i == 0 ? "on" : ""}></theme-card>`).join("")}</div>
      <div class="bar"></div>`;
  }
}
customElements.define("theme-panel", ThemePanel);

class StatusBar extends HTMLElement {
  constructor() {
    super();
    this.attachShadow({ mode: "open" }).innerHTML = `
      <style>
        :host{display:flex;align-items:center;height:18px;background:#f5f5f5;border-top:1px solid #dedede;box-sizing:border-box;font-size:6.500px;color:#444;padding-left:10px}
        .car{width:0;height:0;border:1.500px solid transparent;border-top:2px solid #666;border-bottom:0}
        .r{margin-left:auto;display:flex;align-items:center;padding-right:14px}
        .sl{width:40px;height:1px;background:#ccc;margin:0 4px;position:relative}
        .sl i{position:absolute;left:9px;top:-2.500px;width:5px;height:5px;border-radius:50%;background:#fff;border:.8px solid #aaa;box-sizing:border-box}
      </style>
      <ui-icon name="frame" size="11"></ui-icon>
      <span style="margin-left:12px">页-1</span>
      <i class="car" style="margin-left:34px"></i>
      <b style="margin-left:16px;font-weight:400">页-1</b>
      <span style="margin-left:18px;font-size:9px">+</span>
      <div class="r">
        <ui-icon name="play" size="10"></ui-icon>
        <span style="margin-left:5px;font-size:9px">−</span>
        <div class="sl"><i></i></div>
        <span style="font-size:9px">+</span>
        <span style="margin-left:6px">100%</span>
        <i class="car" style="margin:0 10px 0 4px"></i>
        <ui-icon name="full" size="9" style="margin-right:3px"></ui-icon>
        <ui-icon name="fit" size="9"></ui-icon>
      </div>`;
  }
}
customElements.define("status-bar", StatusBar);

class EdrawApp extends HTMLElement {
  constructor() {
    super();
    this.attachShadow({ mode: "open" }).innerHTML = `
      <style>
        :host{display:flex;flex-direction:column;width:720px;height:465px;overflow:hidden}
        main{display:flex;flex:1;min-height:0}
      </style>
      <title-bar></title-bar>
      <tab-bar></tab-bar>
      <ribbon-bar></ribbon-bar>
      <main><symbol-panel></symbol-panel><canvas-area></canvas-area><side-dock></side-dock><theme-panel></theme-panel></main>
      <status-bar></status-bar>`;
  }
}
customElements.define("edraw-app", EdrawApp);
</script>
</body>
</html>
